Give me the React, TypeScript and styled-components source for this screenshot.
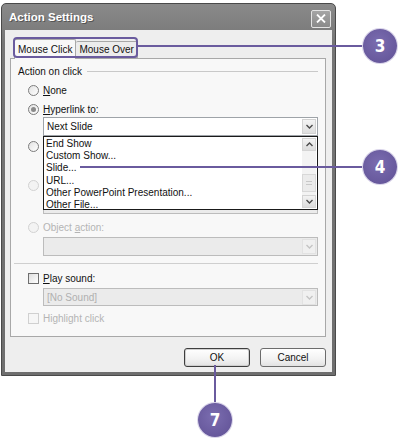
import React from 'react';
import styled, { createGlobalStyle } from 'styled-components';

const PURPLE = '#6a5b9e';

const Global = createGlobalStyle`
  html, body { margin: 0; padding: 0; background: #fff; }
  body { font-family: "Liberation Sans", Arial, sans-serif; }
`;

const Stage = styled.div`
  position: relative;
  width: 400px;
  height: 439px;
  overflow: hidden;
  background: #fff;
`;

const Window = styled.div`
  margin: 3px 0 0 1px;
  width: 335px;
  height: 373px;
  box-sizing: border-box;
  background: linear-gradient(#8a8a8a, #767676 40px, #6e6e6e);
  border: 1px solid #4a4a4a;
  border-radius: 5px 5px 0 0;
  padding: 0 3px 3px 3px;
  display: flex;
  flex-direction: column;
`;

const TitleBar = styled.div`
  height: 26px;
  display: flex;
  align-items: center;
  justify-content: space-between;
  padding: 0 1px 0 4px;
  color: #fff;
  font-size: 11.5px;
  font-weight: bold;
  text-shadow: 1px 1px 0 #555;
`;

const CloseBtn = styled.div`
  width: 18px;
  height: 16px;
  margin-top: 3px;
  border: 1px solid #e4e4e4;
  border-radius: 2px;
  background: linear-gradient(#a5a5a5, #8a8a8a);
  display: flex;
  align-items: center;
  justify-content: center;
`;

const Client = styled.div`
  flex: 1;
  background: #eeeeee;
  display: flex;
  flex-direction: column;
  padding: 8px 6px 0 5px;
`;

const TabStrip = styled.div`
  display: flex;
  align-items: flex-end;
  height: 20px;
  padding-left: 4px;
  position: relative;
  z-index: 1;
`;

const Tab = styled.div<{ $active?: boolean }>`
  height: ${(p) => (p.$active ? 20 : 17)}px;
  box-sizing: border-box;
  padding: 0 3px;
  display: flex;
  align-items: center;
  font-size: 10px;
  color: #111;
  background: ${(p) => (p.$active ? '#f8f8f8' : '#ececec')};
  border: 1px solid #a8a8a8;
  border-bottom: ${(p) => (p.$active ? 'none' : '1px solid #a8a8a8')};
  border-left: ${(p) => (p.$active ? '1px solid #a8a8a8' : 'none')};
  border-radius: 2px 2px 0 0;
  margin-bottom: ${(p) => (p.$active ? -1 : 0)}px;
`;

const Panel = styled.div`
  height: 279px;
  box-sizing: border-box;
  border: 1px solid #a8a8a8;
  background: #f8f8f8;
  padding: 6px 7px 0 7px;
  display: flex;
  flex-direction: column;
  font-size: 10px;
  color: #111;
`;

const GroupLabel = styled.div`
  display: flex;
  align-items: center;
  gap: 5px;
  height: 12px;
  &::after {
    content: '';
    flex: 1;
    height: 1px;
    background: #c9c9c9;
  }
`;

const OptionRow = styled.div<{ $top: number; $disabled?: boolean }>`
  display: flex;
  align-items: center;
  gap: 4px;
  height: 12px;
  margin: ${(p) => p.$top}px 0 0 10px;
  color: ${(p) => (p.$disabled ? '#b4b4b4' : '#111')};
  white-space: nowrap;
`;

const Radio = styled.span<{ $checked?: boolean; $disabled?: boolean }>`
  width: 11px;
  height: 11px;
  box-sizing: border-box;
  border-radius: 50%;
  border: 1px solid ${(p) => (p.$disabled ? '#d2d2d2' : '#7c7c7c')};
  background: ${(p) => (p.$disabled ? '#f3f3f3' : 'linear-gradient(135deg, #e2e2e2, #fff)')};
  display: flex;
  align-items: center;
  justify-content: center;
  &::after {
    content: '';
    display: ${(p) => (p.$checked ? 'block' : 'none')};
    width: 5px;
    height: 5px;
    border-radius: 50%;
    background: #8a8a8a;
  }
`;

const Check = styled.span<{ $disabled?: boolean }>`
  width: 11px;
  height: 11px;
  box-sizing: border-box;
  border: 1px solid ${(p) => (p.$disabled ? '#d0d0d0' : '#6e6e6e')};
  background: ${(p) => (p.$disabled ? '#f6f6f6' : 'linear-gradient(135deg, #dedede, #fff)')};
`;

const Key = styled.span`
  text-decoration: underline;
`;

const FieldWrap = styled.div<{ $top: number }>`
  position: relative;
  margin: ${(p) => p.$top}px 0 0 25px;
`;

const Field = styled.div<{ $disabled?: boolean; $h?: number }>`
  height: ${(p) => p.$h ?? 19}px;
  box-sizing: border-box;
  border: 1px solid ${(p) => (p.$disabled ? '#bcbcbc' : '#9ea3a8')};
  background: ${(p) => (p.$disabled ? '#ebebeb' : '#fff')};
  color: ${(p) => (p.$disabled ? '#b0b0b0' : '#111')};
  display: flex;
  align-items: center;
  justify-content: space-between;
  padding: 0 1px 0 3px;
`;

const ArrowBtn = styled.span<{ $disabled?: boolean }>`
  width: 14px;
  height: 15px;
  box-sizing: border-box;
  border: 1px solid ${(p) => (p.$disabled ? '#e2e2e2' : '#d2d2d2')};
  background: ${(p) => (p.$disabled ? '#f0f0f0' : 'linear-gradient(#f4f4f4, #dedede)')};
  display: flex;
  align-items: center;
  justify-content: center;
`;

const DropList = styled.div`
  position: absolute;
  top: 100%;
  left: 0;
  right: 0;
  height: 74px;
  box-sizing: border-box;
  border: 1px solid #1a1a1a;
  background: #fff;
  z-index: 3;
  display: flex;
`;

const DropItems = styled.div`
  flex: 1;
  padding: 1px 0 0 2px;
  display: flex;
  flex-direction: column;
`;

const DropItem = styled.div`
  height: 12.2px;
  line-height: 12.2px;
  color: #111;
  white-space: nowrap;
`;

const ScrollBar = styled.div`
  width: 14px;
  margin: 1px 1px 1px 0;
  background: #f3f3f3;
  display: flex;
  flex-direction: column;
  justify-content: space-between;
  position: relative;
`;

const ScrollBtn = styled.span`
  height: 13px;
  box-sizing: border-box;
  border: 1px solid #d4d4d4;
  background: linear-gradient(#f3f3f3, #dcdcdc);
  display: flex;
  align-items: center;
  justify-content: center;
`;

const Thumb = styled.span`
  position: absolute;
  left: 0;
  right: 0;
  top: 36px;
  height: 18px;
  box-sizing: border-box;
  border: 1px solid #d8d8d8;
  background: #ebebeb;
  display: flex;
  flex-direction: column;
  align-items: center;
  justify-content: center;
  gap: 2px;
  &::before, &::after {
    content: '';
    width: 6px;
    height: 1px;
    background: #c8c8c8;
  }
`;

const Separator = styled.div`
  height: 1px;
  background: #cfcfcf;
  margin: 7px 0 0 -4px;
`;

const ButtonRow = styled.div`
  display: flex;
  justify-content: flex-end;
  gap: 10px;
  margin-top: 11px;
`;

const Button = styled.div<{ $default?: boolean }>`
  width: 66px;
  height: 19px;
  box-sizing: border-box;
  border: 1px solid ${(p) => (p.$default ? '#3e3e3e' : '#6c6c6c')};
  border-radius: 3px;
  background: linear-gradient(#ffffff, #f2f2f2 60%, #e2e2e2);
  box-shadow: ${(p) => (p.$default ? 'inset 0 0 0 1px #cfcfcf' : 'none')};
  display: flex;
  align-items: center;
  justify-content: center;
  font-size: 10px;
  color: #111;
`;

/* callout annotations overlaying the screenshot */
const TabOutline = styled.div`
  position: absolute;
  left: 13px;
  top: 37px;
  width: 125px;
  height: 21px;
  box-sizing: border-box;
  border: 2px solid ${PURPLE};
  border-radius: 4px;
  z-index: 5;
`;

const HLine = styled.div<{ $x: number; $y: number; $w: number }>`
  position: absolute;
  left: ${(p) => p.$x}px;
  top: ${(p) => p.$y}px;
  width: ${(p) => p.$w}px;
  height: 2px;
  background: ${PURPLE};
  z-index: 5;
`;

const VLine = styled.div<{ $x: number; $y: number; $h: number }>`
  position: absolute;
  left: ${(p) => p.$x}px;
  top: ${(p) => p.$y}px;
  width: 2px;
  height: ${(p) => p.$h}px;
  background: ${PURPLE};
  z-index: 5;
`;

const Bubble = styled.div<{ $cx: number; $cy: number }>`
  position: absolute;
  left: ${(p) => p.$cx - 17}px;
  top: ${(p) => p.$cy - 17}px;
  width: 34px;
  height: 34px;
  border-radius: 50%;
  background: radial-gradient(circle at 45% 40%, #7b6db0, #5f5094);
  box-shadow: 0 0 0 1px #d9d4ea;
  color: #fff;
  font-family: "DejaVu Sans Condensed", "Liberation Sans", sans-serif;
  font-weight: bold;
  font-size: 17px;
  display: flex;
  align-items: center;
  justify-content: center;
  z-index: 6;
`;

const Chevron = ({ up = false, color = '#4a4a4a' }: { up?: boolean; color?: string }) => (
  <svg width="7" height="5" viewBox="0 0 7 5">
    <path
      d={up ? 'M0.5 4 L3.5 1 L6.5 4' : 'M0.5 1 L3.5 4 L6.5 1'}
      fill="none"
      stroke={color}
      strokeWidth="1.4"
    />
  </svg>
);

const CloseX = () => (
  <svg width="10" height="9" viewBox="0 0 10 9">
    <path d="M1 0.5 L9 8.5 M9 0.5 L1 8.5" stroke="#fff" strokeWidth="1.8" />
  </svg>
);

const items = [
  'End Show',
  'Custom Show...',
  'Slide...',
  'URL...',
  'Other PowerPoint Presentation...',
  'Other File...',
];

export default function App() {
  return (
    <Stage>
      <Global />
      <Window>
        <TitleBar>
          <span>Action Settings</span>
          <CloseBtn>
            <CloseX />
          </CloseBtn>
        </TitleBar>
        <Client>
          <TabStrip>
            <Tab $active>Mouse Click</Tab>
            <Tab>Mouse Over</Tab>
          </TabStrip>
          <Panel>
            <GroupLabel>Action on click</GroupLabel>
            <OptionRow $top={7}>
              <Radio />
              <span>
                <Key>N</Key>one
              </span>
            </OptionRow>
            <OptionRow $top={7}>
              <Radio $checked />
              <span>
                <Key>H</Key>yperlink to:
              </span>
            </OptionRow>
            <FieldWrap $top={2}>
              <Field>
                <span>Next Slide</span>
                <ArrowBtn>
                  <Chevron />
                </ArrowBtn>
              </Field>
              <DropList>
                <DropItems>
                  {items.map((t) => (
                    <DropItem key={t}>{t}</DropItem>
                  ))}
                </DropItems>
                <ScrollBar>
                  <ScrollBtn>
                    <Chevron up />
                  </ScrollBtn>
                  <Thumb />
                  <ScrollBtn>
                    <Chevron />
                  </ScrollBtn>
                </ScrollBar>
              </DropList>
            </FieldWrap>
            <OptionRow $top={4}>
              <Radio />
            </OptionRow>
            <FieldWrap $top={4}>
              <Field $disabled />
            </FieldWrap>
            <OptionRow $top={4} $disabled>
              <Radio $disabled />
            </OptionRow>
            <FieldWrap $top={4}>
              <Field $disabled />
            </FieldWrap>
            <OptionRow $top={7} $disabled>
              <Radio $disabled />
              <span>
                Object <Key>a</Key>ction:
              </span>
            </OptionRow>
            <FieldWrap $top={4}>
              <Field $disabled>
                <span />
                <ArrowBtn $disabled>
                  <Chevron color="#c4c4c4" />
                </ArrowBtn>
              </Field>
            </FieldWrap>
            <Separator />
            <OptionRow $top={8}>
              <Check />
              <span>
                <Key>P</Key>lay sound:
              </span>
            </OptionRow>
            <FieldWrap $top={4}>
              <Field $disabled $h={18}>
                <span>[No Sound]</span>
                <ArrowBtn $disabled>
                  <Chevron color="#c4c4c4" />
                </ArrowBtn>
              </Field>
            </FieldWrap>
            <OptionRow $top={6} $disabled>
              <Check $disabled />
              <span>Highlight click</span>
            </OptionRow>
          </Panel>
          <ButtonRow>
            <Button $default>OK</Button>
            <Button>Cancel</Button>
          </ButtonRow>
        </Client>
      </Window>

      <TabOutline />
      <HLine $x={137} $y={45} $w={228} />
      <Bubble $cx={380} $cy={46}>3</Bubble>

      <HLine $x={80} $y={166} $w={284} />
      <Bubble $cx={380} $cy={167}>4</Bubble>

      <VLine $x={214} $y={365} $h={40} />
      <Bubble $cx={215} $cy={420}>7</Bubble>
    </Stage>
  );
}
